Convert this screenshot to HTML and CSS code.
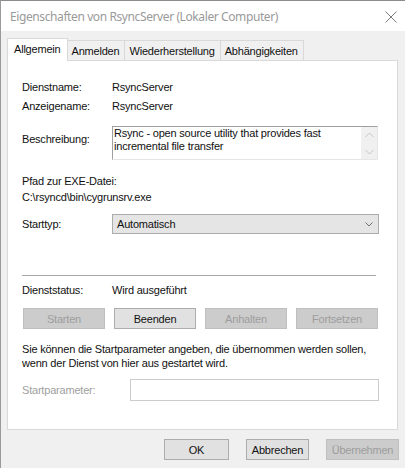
FILE: index.html
```html
<!DOCTYPE html>
<html lang="de">
<head>
    <meta charset="UTF-8">
    <title>Eigenschaften von RsyncServer (Lokaler Computer)</title>
    <link rel="stylesheet" href="styles.css">
</head>
<body>
    <div class="window">
        <div class="titlebar">
            <span class="title">Eigenschaften von RsyncServer (Lokaler Computer)</span>
            <svg class="close" width="12" height="12" viewBox="0 0 12 12">
                <path d="M0.5 0.5 L11.5 11.5 M11.5 0.5 L0.5 11.5" stroke="#7a7a7a" stroke-width="1" fill="none"/>
            </svg>
        </div>

        <div class="dialog">
            <div class="tabs">
                <div class="tab active">Allgemein</div>
                <div class="tab">Anmelden</div>
                <div class="tab">Wiederherstellung</div>
                <div class="tab">Abhängigkeiten</div>
            </div>

            <div class="panel">
                <div class="row first">
                    <span class="label">Dienstname:</span>
                    <span>RsyncServer</span>
                </div>
                <div class="row second">
                    <span class="label">Anzeigename:</span>
                    <span>RsyncServer</span>
                </div>
                <div class="row desc-row">
                    <span class="label desc-label">Beschreibung:</span>
                    <div class="desc-box">
                        <div class="desc-text">Rsync - open source utility that provides fast incremental file transfer</div>
                        <div class="scrollbar">
                            <svg width="9" height="6" viewBox="0 0 9 6"><path d="M0.5 5 L4.5 1 L8.5 5" stroke="#c4c4c4" fill="none"/></svg>
                            <svg width="9" height="6" viewBox="0 0 9 6"><path d="M0.5 1 L4.5 5 L8.5 1" stroke="#c4c4c4" fill="none"/></svg>
                        </div>
                    </div>
                </div>
                <div class="path-label">Pfad zur EXE-Datei:</div>
                <div class="path">C:\rsyncd\bin\cygrunsrv.exe</div>
                <div class="row start-row">
                    <span class="label">Starttyp:</span>
                    <div class="combo">
                        <span>Automatisch</span>
                        <svg width="8" height="5" viewBox="0 0 8 5"><path d="M0.5 0.5 L4 4 L7.5 0.5" stroke="#707070" fill="none"/></svg>
                    </div>
                </div>

                <div class="separator"></div>

                <div class="row status-row">
                    <span class="label">Dienststatus:</span>
                    <span>Wird ausgeführt</span>
                </div>
                <div class="service-buttons">
                    <button class="btn" disabled>Starten</button>
                    <button class="btn">Beenden</button>
                    <button class="btn" disabled>Anhalten</button>
                    <button class="btn" disabled>Fortsetzen</button>
                </div>

                <p class="hint">Sie können die Startparameter angeben, die übernommen werden sollen,<br>wenn der Dienst von hier aus gestartet wird.</p>

                <div class="row param-row">
                    <span class="label param-label">Startparameter:</span>
                    <div class="param-input"></div>
                </div>
            </div>

            <div class="footer">
                <button class="btn ok">OK</button>
                <button class="btn cancel">Abbrechen</button>
                <button class="btn apply" disabled>Übernehmen</button>
            </div>
        </div>
    </div>
</body>
</html>
```

FILE: styles.css
```css
body {
    margin: 0;
    background-color: #f0f0f0;
    font-family: "Liberation Sans", Arial, sans-serif;
    font-size: 11px;
    letter-spacing: -0.2px;
    color: #111;
}
.window {
    width: 405px;
    height: 468px;
    box-sizing: border-box;
    border-left: 1px solid #9a9a9a;
    border-top: 1px solid #8c8c8c;
    background-color: #f0f0f0;
    overflow: hidden;
}
.titlebar {
    height: 30px;
    background-color: white;
    display: flex;
    align-items: center;
    justify-content: space-between;
    padding: 0 8px 0 9px;
}
.title {
    font-family: "Noto Sans", sans-serif;
    font-size: 12px;
    letter-spacing: -0.4px;
    color: #9a9a9a;
    margin-top: 1px;
}
.close {
    margin-top: 1px;
}
.dialog {
    padding: 7px 7px 0 6px;
}
.tabs {
    display: flex;
    align-items: flex-end;
    height: 22px;
    padding-left: 1px;
}
.tab {
    height: 20px;
    box-sizing: border-box;
    border: 1px solid #d9d9d9;
    border-bottom: none;
    margin-left: -1px;
    padding: 0 5px 0 4px;
    display: flex;
    align-items: center;
    background-color: #f0f0f0;
    white-space: nowrap;
}
.tab.active {
    height: 23px;
    margin-bottom: -1px;
    padding: 0 6px 2px 6px;
    background-color: white;
    position: relative;
    z-index: 1;
}
.panel {
    height: 370px;
    box-sizing: border-box;
    background-color: white;
    border: 1px solid #d9d9d9;
    padding: 0 0 0 14px;
    line-height: 15px;
}
.row {
    display: flex;
    align-items: center;
}
.label {
    width: 90px;
    flex-shrink: 0;
}
.first {
    margin-top: 19px;
}
.second {
    margin-top: 4px;
}
.desc-row {
    margin-top: 12px;
    align-items: flex-start;
}
.desc-label {
    padding-top: 6px;
}
.desc-box {
    width: 266px;
    height: 34px;
    box-sizing: border-box;
    border: 1px solid;
    border-color: #a0a0a0 #e6e6e6 #e6e6e6 #a0a0a0;
    display: flex;
    justify-content: space-between;
}
.desc-text {
    width: 235px;
    line-height: 13px;
    padding-left: 1px;
}
.scrollbar {
    width: 16px;
    background-color: #f0f0f0;
    display: flex;
    flex-direction: column;
    align-items: center;
    justify-content: space-between;
    padding: 5px 0 4px;
    box-sizing: border-box;
}
.path-label {
    margin-top: 14px;
}
.path {
    margin-top: 1px;
}
.start-row {
    margin-top: 9px;
}
.combo {
    width: 267px;
    height: 20px;
    box-sizing: border-box;
    background-color: #e5e5e5;
    border: 1px solid #acacac;
    display: flex;
    align-items: center;
    justify-content: space-between;
    padding: 0 5px 0 4px;
}
.separator {
    width: 354px;
    height: 1px;
    background-color: #a8a8a8;
    margin-top: 41px;
}
.status-row {
    margin-top: 7px;
}
.service-buttons {
    display: flex;
    gap: 9px;
    margin-top: 10px;
    padding-left: 1px;
}
.btn {
    font-family: "Liberation Sans", Arial, sans-serif;
    font-size: 11px;
    letter-spacing: -0.2px;
    color: #111;
    height: 21px;
    width: 82px;
    padding: 0;
    background-color: #e1e1e1;
    border: 1px solid #adadad;
}
.btn:disabled {
    background-color: #cccccc;
    border-color: #bfbfbf;
    color: #9d9d9d;
}
.hint {
    margin: 13px 0 0;
    line-height: 14px;
}
.param-row {
    margin-top: 9px;
}
.param-label {
    width: 108px;
    color: #a0a0a0;
}
.param-input {
    width: 249px;
    height: 22px;
    box-sizing: border-box;
    border: 1px solid #cccccc;
    background-color: white;
}
.footer {
    display: flex;
    justify-content: flex-end;
    gap: 17px;
    margin-top: 9px;
    margin-right: -1px;
}
.ok {
    width: 65px;
}
.cancel {
    width: 63px;
}
.apply {
    width: 73px;
}
```
